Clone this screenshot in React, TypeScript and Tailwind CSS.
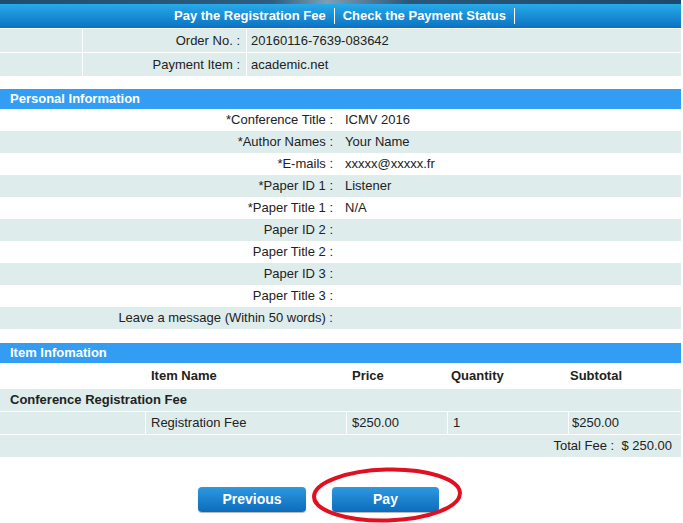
import React from 'react';

const personal: [string, string][] = [
  ['*Conference Title :', 'ICMV 2016'],
  ['*Author Names :', 'Your Name'],
  ['*E-mails :', 'xxxxx@xxxxx.fr'],
  ['*Paper ID 1 :', 'Listener'],
  ['*Paper Title 1 :', 'N/A'],
  ['Paper ID 2 :', ''],
  ['Paper Title 2 :', ''],
  ['Paper ID 3 :', ''],
  ['Paper Title 3 :', ''],
  ['Leave a message (Within 50 words) :', ''],
];

const font = { fontFamily: '"Liberation Sans", Arial, sans-serif' };

const SectionHeader = ({ title }: { title: string }) => (
  <div className="h-[20px] bg-[#329df3] pl-[10px] flex items-center text-[13px] font-bold text-white">
    {title}
  </div>
);

const App: React.FC = () => {
  return (
    <div className="w-[683px] h-[523px] bg-white text-[13px] text-[#222] overflow-hidden" style={font}>
      <div className="w-[681px]">
        {/* banner strip */}
        <div className="h-[4px] bg-[linear-gradient(to_right,#1f4d70,#2d5d80_40%,#7d9fb4_48%,#2a587a_60%,#1d4a6c)]" />
        <div className="h-[24px] bg-[linear-gradient(to_bottom,#27aaea,#0b72c2)] flex items-center justify-center font-bold text-white text-[13px]">
          <span className="px-2 border-r border-white leading-[16px]">Pay the Registration Fee</span>
          <span className="px-2 border-r border-white leading-[16px]">Check the Payment Status</span>
        </div>

        {/* order */}
        <div className="mt-px flex flex-col gap-px">
          {[
            ['Order No. :', '20160116-7639-083642'],
            ['Payment Item :', 'academic.net'],
          ].map(([k, v]) => (
            <div key={k} className="flex h-[23px] gap-px">
              <div className="w-[82px] bg-[#deecec]" />
              <div className="w-[163px] bg-[#deecec] flex items-center justify-end pr-[6px]">{k}</div>
              <div className="flex-1 bg-[#deecec] flex items-center pl-[4px]">{v}</div>
            </div>
          ))}
        </div>

        <div className="mt-[13px]">
          <SectionHeader title="Personal Information" />
          {personal.map(([k, v], i) => (
            <div key={k} className={`flex h-[22px] items-center ${i % 2 ? 'bg-[#deecec]' : 'bg-white'}`}>
              <div className="w-[337px] text-right pr-[4px]">{k}</div>
              <div className="pl-[8px]">{v}</div>
            </div>
          ))}
        </div>

        <div className="mt-[14px]">
          <SectionHeader title="Item Infomation" />
          <div className="grid grid-cols-[145px_200px_100px_120px_1fr] h-[26px] items-center font-bold">
            <div />
            <div className="pl-[6px]">Item Name</div>
            <div className="pl-[7px]">Price</div>
            <div className="pl-[6px]">Quantity</div>
            <div className="pl-[5px]">Subtotal</div>
          </div>
          <div className="h-[22px] bg-[#deecec] flex items-center pl-[10px] font-bold">Conference Registration Fee</div>
          <div className="mt-px grid grid-cols-[145px_200px_100px_120px_1fr] gap-px h-[22px]">
            <div className="bg-[#deecec]" />
            <div className="bg-[#deecec] flex items-center pl-[5px]">Registration Fee</div>
            <div className="bg-[#deecec] flex items-center pl-[5px]">$250.00</div>
            <div className="bg-[#deecec] flex items-center pl-[5px]">1</div>
            <div className="bg-[#deecec] flex items-center pl-[3px]">$250.00</div>
          </div>
          <div className="mt-px h-[22px] bg-[#deecec] flex items-center justify-end pr-[9px]">Total Fee :&nbsp; $ 250.00</div>
        </div>

        <div className="mt-[30px] flex gap-[26px] pl-[198px]">
          <button className="w-[108px] h-[25px] rounded-[4px] bg-[linear-gradient(to_bottom,#2f98e0,#0b6cbc)] text-white font-bold text-[14px] shadow-[0_1px_1px_rgba(0,0,0,0.3)]" style={{ fontFamily: 'Arial, "Liberation Sans", sans-serif' }}>
            Previous
          </button>
          <div className="relative">
            <button className="w-[107px] h-[25px] rounded-[4px] bg-[linear-gradient(to_bottom,#2f98e0,#0b6cbc)] text-white font-bold text-[14px] shadow-[0_1px_1px_rgba(0,0,0,0.3)]" style={{ fontFamily: 'Arial, "Liberation Sans", sans-serif' }}>
              Pay
            </button>
            <svg className="absolute left-[-22px] top-[-20px] pointer-events-none" width="154" height="56" viewBox="0 0 154 56">
              <ellipse cx="77" cy="28" rx="73" ry="25.5" fill="none" stroke="#e01020" strokeWidth="4" transform="rotate(-1.5 77 28)" />
            </svg>
          </div>
        </div>
      </div>
    </div>
  );
};

export default App;
